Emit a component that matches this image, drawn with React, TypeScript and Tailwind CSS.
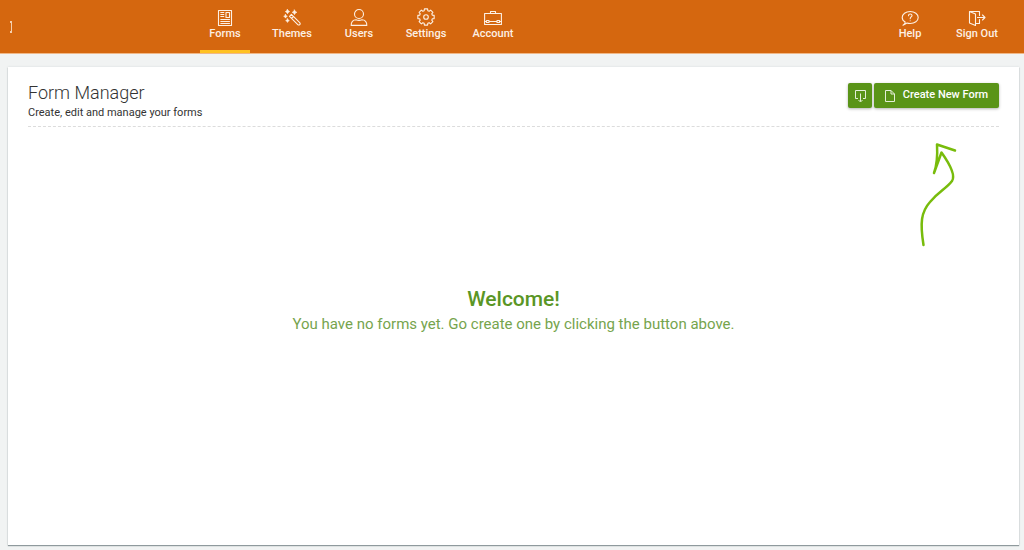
import type { ReactNode } from "react";

// eight flat teeth around a 9,9 centre
const gearPoints = Array.from({ length: 8 }, (_, tooth) =>
  [
    [-16, 6.6],
    [-11, 8.3],
    [11, 8.3],
    [16, 6.6],
  ].map(([offset, radius]) => {
    const angle = ((tooth * 45 + offset) * Math.PI) / 180;
    return `${(9 + radius * Math.cos(angle)).toFixed(2)},${(9 + radius * Math.sin(angle)).toFixed(2)}`;
  }),
)
  .flat()
  .join(" ");

interface NavItemProps {
  label: string;
  active?: boolean;
  children: ReactNode;
}

function NavItem({ label, active, children }: NavItemProps) {
  return (
    <li className="flex w-[50px]">
      <a
        href="#"
        aria-current={active ? "page" : undefined}
        className={`flex w-full flex-col items-center border-b-3 pt-2 text-[11px] leading-4 font-medium whitespace-nowrap text-[#fdf0e4] ${
          active ? "border-[#ffc222]" : "border-transparent"
        }`}
      >
        <svg
          viewBox="0 0 18 18"
          className="h-[18px] w-[18px] shrink-0"
          fill="none"
          stroke="currentColor"
          strokeWidth="1.1"
          strokeLinecap="round"
          strokeLinejoin="round"
          aria-hidden="true"
        >
          {children}
        </svg>
        {label}
      </a>
    </li>
  );
}

function FormsIcon() {
  return (
    <>
      <path d="M2.5 2.5h13v15h-13z" />
      <path d="M10 4.500h3.500v5H10zM4.800 4.500h3M4.800 6.500h3M4.800 8.500h3M4.800 11.500h8.700M4.800 13.500h8.700M4.800 15.500h8.700" />
    </>
  );
}

function ThemesIcon() {
  return (
    <>
      <path d="M6.500 8.300l1.900-1.900 8.300 8.300a1.300 1.300 0 0 1-1.900 1.900zM8.600 10.400l1.900-1.900" />
      <path
        fill="currentColor"
        strokeWidth="0.7"
        d="M4.500 1.500l.8 1.300 1.300.8-1.300.8-.8 1.300-.8-1.300-1.300-.8 1.300-.8zM11.500 2l.8 1.500 1.500.8-1.500.8-.8 1.500-.8-1.500-1.500-.8 1.500-.8zM2.500 6.500l.6 1.200 1.200.6-1.200.6-.6 1.200-.6-1.200-1.200-.6 1.200-.6zM4.500 10.800l.6 1.200 1.200.6-1.200.6-.6 1.200-.6-1.200-1.200-.6 1.200-.6z"
      />
    </>
  );
}

function UsersIcon() {
  return (
    <>
      <circle cx="9" cy="6" r="4.500" />
      <path d="M1.200 17.400c-.2-3.400 1.800-5.600 4.800-5.600 2 .8 4 .8 6 0 3 0 5 2.200 4.800 5.600z" />
    </>
  );
}

function SettingsIcon() {
  return (
    <>
      <polygon points={gearPoints} />
      <circle cx="9" cy="9" r="2.300" />
    </>
  );
}

function AccountIcon() {
  return (
    <>
      <path d="M.6 5.500h16.800v11H.6zM6.500 5.500v-2h5v2" />
      <path d="M.6 13.500h2M5.500 13.500h7M15.500 13.500h2M2.500 12.500h2.500v2H2.500zM13 12.500h2.500v2H13z" />
    </>
  );
}

function HelpIcon() {
  return (
    <>
      <path d="M4.200 14C2.200 13 1.200 11.300 1.200 9.500c0-3.500 3.500-6 8-6s8 2.500 8 6-3.500 6-8 6c-1.200 0-2.200-.1-3.200-.5L2 17.200c1.500-.8 2.200-2 2.200-3.200z" />
      <path d="M7.500 7.700c0-2.300 3.500-2.300 3.500-.2 0 1.400-1.800 1.500-1.800 3.200M9.200 12.700v.1" />
    </>
  );
}

function SignOutIcon() {
  return (
    <>
      <path d="M1.500 3.500h10v4M11.500 11.500v4H8M1.500 3.500v11.500l6 2.500V6l-6-2.500" />
      <path d="M9.500 9.500h7.500M14.500 7l2.500 2.500-2.500 2.500" />
    </>
  );
}

export default function App() {
  return (
    <div className="flex min-h-screen flex-col bg-[#f1f3f3] font-['Roboto','Noto_Sans',sans-serif]">
      <header className="flex h-[54px] items-stretch border-b border-[#f0b888] bg-[#d5670f] pr-[22px]">
        <div className="flex w-[200px] items-center pl-[10px]">
          <span className="h-3 w-[2px] border-y-2 border-r border-[#f4cfae]" />
        </div>
        <nav className="flex flex-1 justify-between" aria-label="Main">
          <ul className="flex gap-[17px]">
            <NavItem label="Forms" active>
              <FormsIcon />
            </NavItem>
            <NavItem label="Themes">
              <ThemesIcon />
            </NavItem>
            <NavItem label="Users">
              <UsersIcon />
            </NavItem>
            <NavItem label="Settings">
              <SettingsIcon />
            </NavItem>
            <NavItem label="Account">
              <AccountIcon />
            </NavItem>
          </ul>
          <ul className="flex gap-[17px]">
            <NavItem label="Help">
              <HelpIcon />
            </NavItem>
            <NavItem label="Sign Out">
              <SignOutIcon />
            </NavItem>
          </ul>
        </nav>
      </header>

      <main className="mt-[13px] mr-[5px] mb-[5px] ml-2 flex flex-1 flex-col bg-white px-5 pt-4 shadow-[0_1px_1px_#8f9a9d,0_0_2px_#d5dadb]">
        <div className="flex items-start justify-between border-b border-dashed border-[#dcdcdc] pb-[5px]">
          <div className="text-[#333]">
            <h1 className="text-[18px] leading-5 font-light">Form Manager</h1>
            <p className="pt-[2px] text-[11px] leading-4">Create, edit and manage your forms</p>
          </div>
          <div className="flex gap-[2px] text-[11px] font-medium text-white">
            <button
              type="button"
              aria-label="Import form"
              className="flex h-[25px] w-6 items-center justify-center rounded-[2px] bg-[#5a9418] shadow-[0_1px_3px_rgba(0,0,0,0.3)]"
            >
              <svg viewBox="0 0 14 16" className="h-4 w-[14px]" fill="none" stroke="#e4efd8">
                <path d="M5 10.500H2.500v-8h10v8H10M7.500 5.500v8M5.500 12l2 2 2-2" />
              </svg>
            </button>
            <button
              type="button"
              className="flex h-[25px] w-[125px] items-center justify-center gap-2 rounded-[2px] bg-[#5a9418] whitespace-nowrap shadow-[0_1px_3px_rgba(0,0,0,0.3)]"
            >
              <svg viewBox="0 0 10 12" className="h-3 w-[10px]" fill="none" stroke="#e4efd8">
                <path d="M.5.5h5.500l3.500 3.500v7.500h-9zM6 .5V4h3.500" />
              </svg>
              Create New Form
            </button>
          </div>
        </div>

        <div className="flex justify-end pt-4 pr-10">
          <svg
            viewBox="0 0 40 106"
            className="h-[106px] w-10"
            fill="none"
            stroke="#78bc0c"
            strokeWidth="2.500"
            strokeLinecap="round"
            strokeLinejoin="round"
            aria-hidden="true"
          >
            <path d="M4.500 102C1 80 2 69 11 59c9-11 16-13 22-21 4-6-3-18-10.500-28.500L15 30c3-8 3.500-20 3-28.500L36 7.500" />
          </svg>
        </div>

        <section className="pt-9 pb-5 text-center text-[#5a9625]">
          <h2 className="text-[21px] leading-7 font-medium">Welcome!</h2>
          <p className="text-[15px] leading-[22px] text-[#76a44d]">
            You have no forms yet. Go create one by clicking the button above.
          </p>
        </section>
      </main>
    </div>
  );
}
